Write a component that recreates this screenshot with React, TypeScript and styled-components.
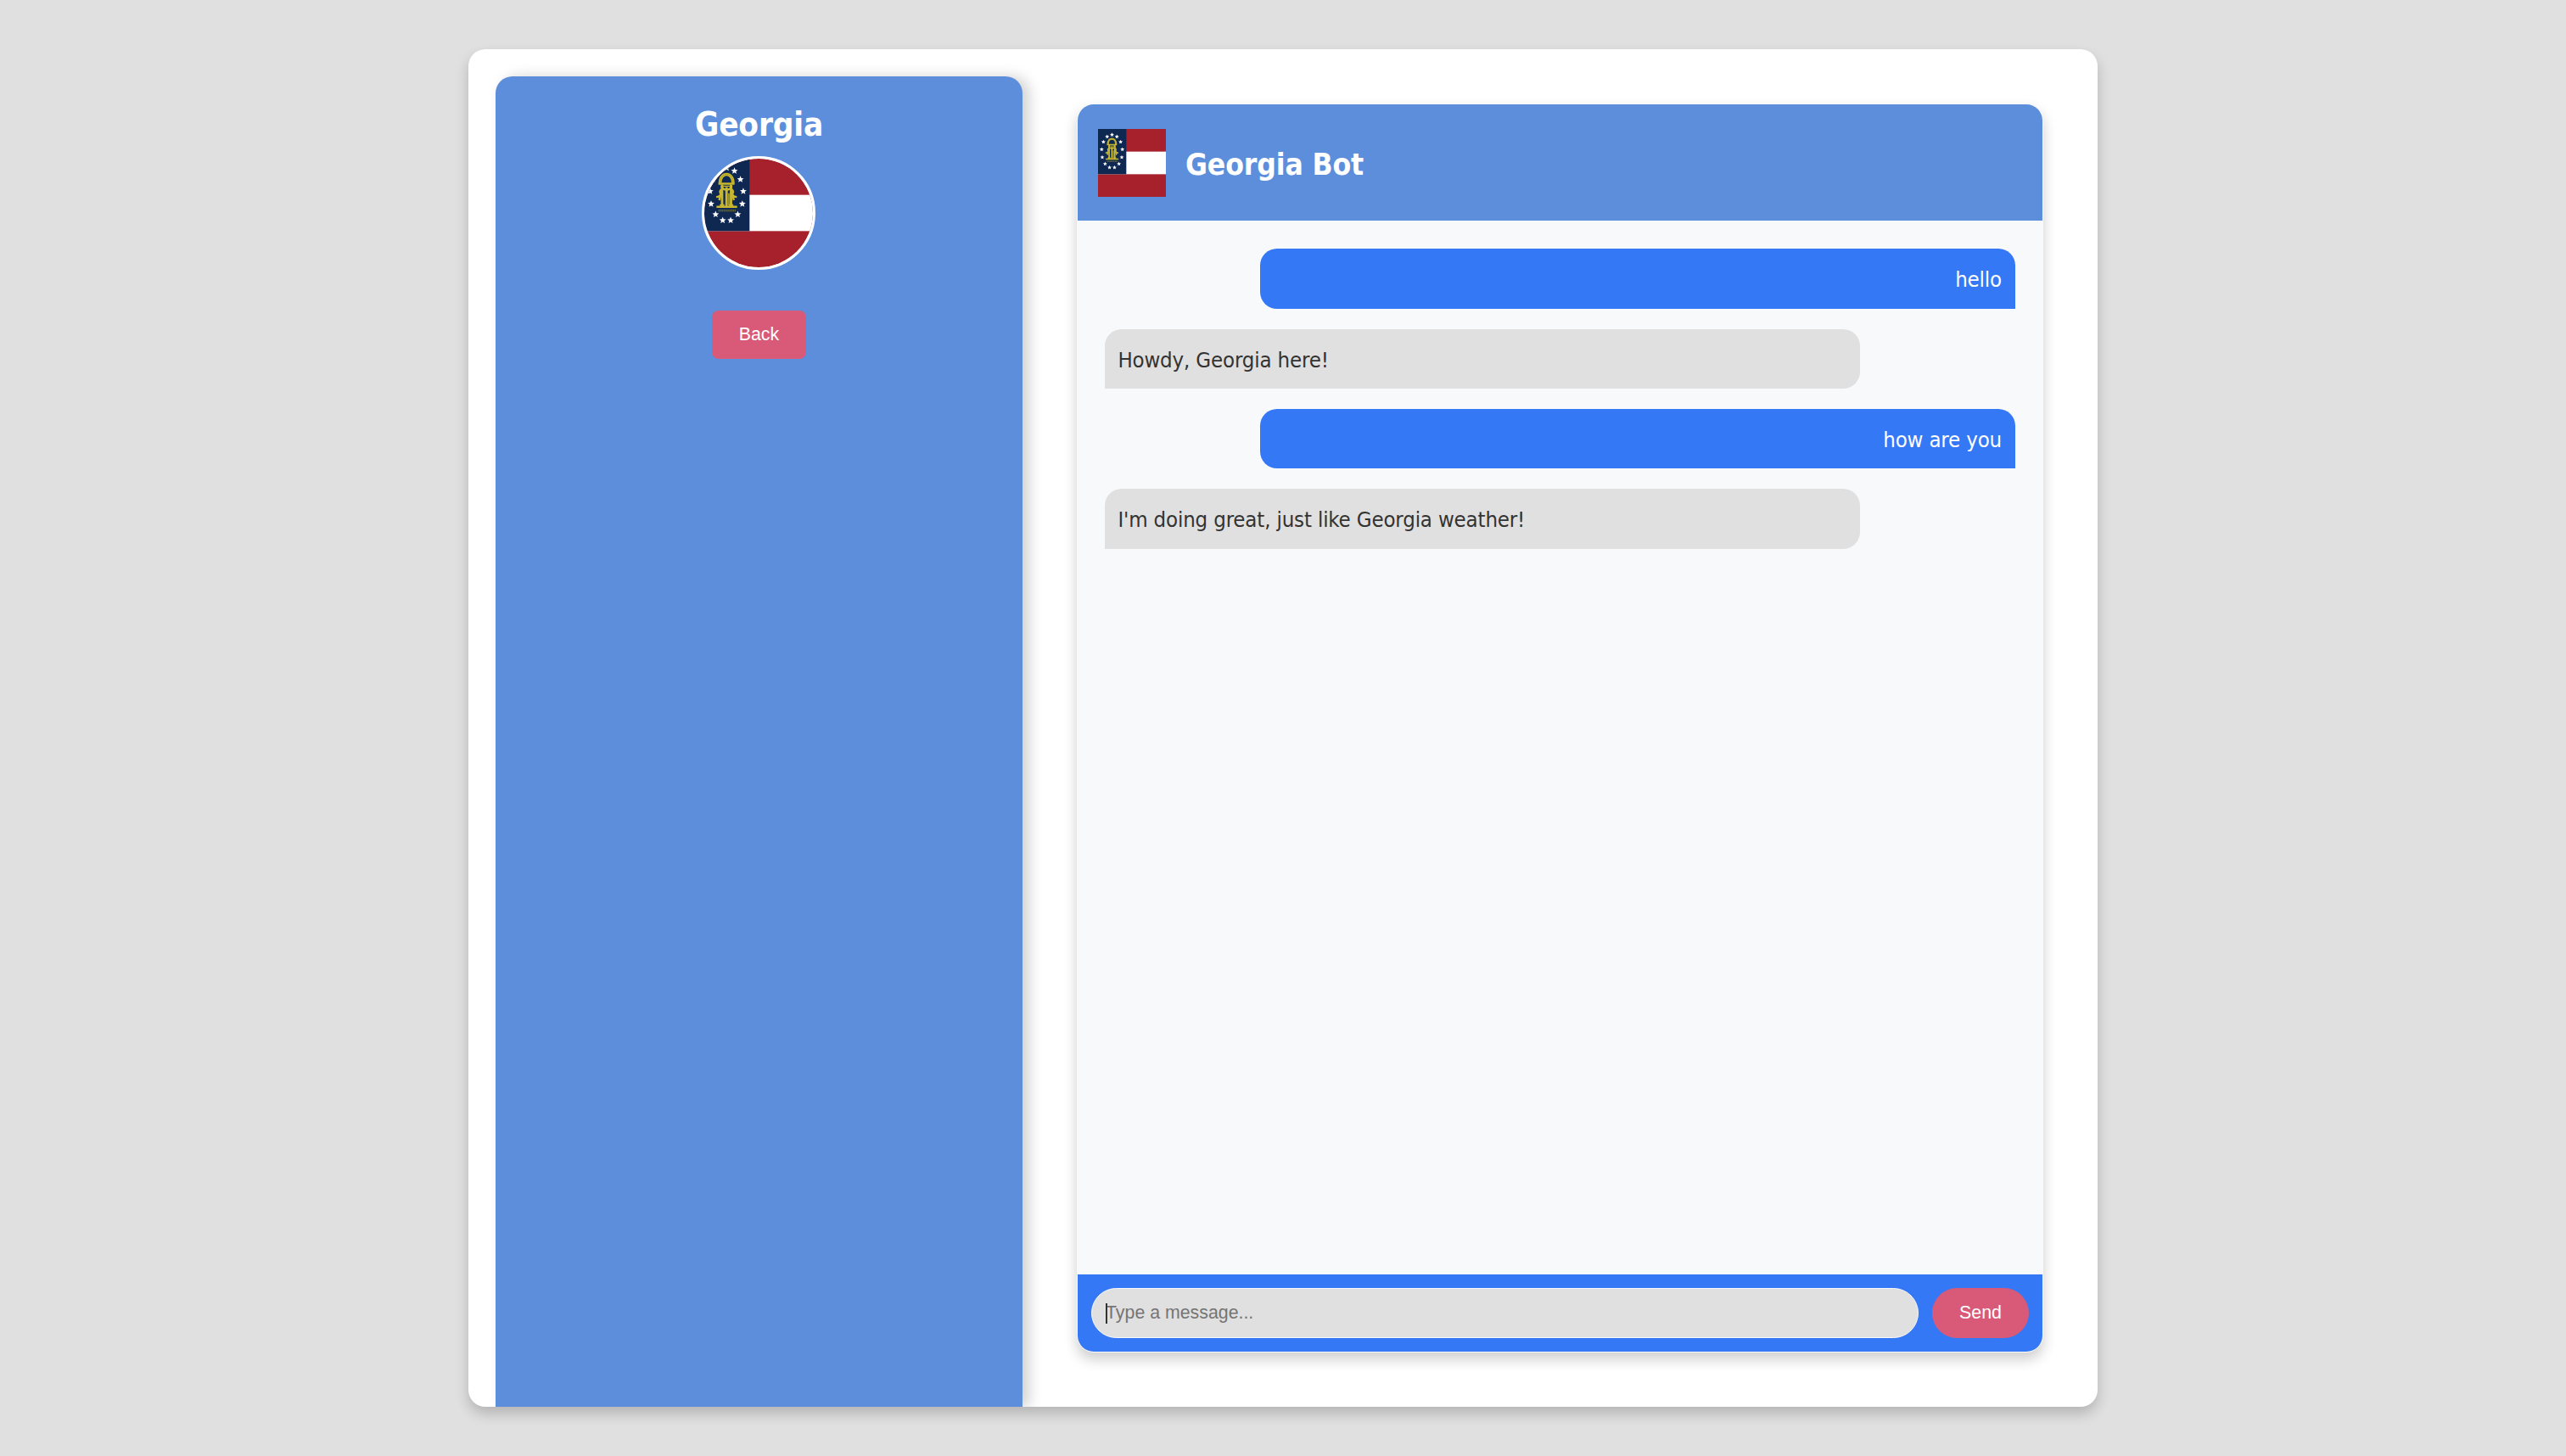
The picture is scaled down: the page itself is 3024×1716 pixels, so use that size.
import React from "react";
import styled, { createGlobalStyle, css } from "styled-components";

const color = {
  page: "#e0e0e0",
  surface: "#ffffff",
  panel: "#5c8edb",
  chat: "#f8f9fb",
  user: "#3478f6",
  bot: "#e0e0e0",
  accent: "#d95a78",
  text: "#333333",
};

const bodyFont = `"DejaVu Sans Condensed", "DejaVu Sans", sans-serif`;
const controlFont = `"Liberation Sans", Arial, sans-serif`;

const GlobalStyle = createGlobalStyle`
  * { box-sizing: border-box; }
  body {
    margin: 0;
    background: ${color.page};
    color: ${color.text};
    font-family: ${bodyFont};
  }
`;

const Page = styled.div`
  display: flex;
  align-items: center;
  justify-content: center;
  height: 100vh;
  overflow: hidden;
`;

const Container = styled.div`
  display: flex;
  gap: 64px;
  width: 1920px;
  height: 1600px;
  padding: 32px 64px 0 32px;
  overflow: hidden;
  background: ${color.surface};
  border-radius: 20px;
  box-shadow: 0 8px 16px rgba(0, 0, 0, 0.2);
`;

const Sidebar = styled.aside`
  display: flex;
  flex-direction: column;
  align-items: center;
  flex: none;
  width: 621px;
  padding-top: 33px;
  background: ${color.panel};
  border-radius: 20px 20px 0 0;
  box-shadow: 8px 0 16px rgba(0, 0, 0, 0.18);
`;

const SidebarTitle = styled.h2`
  margin: 0 0 13px;
  color: #fff;
  font-size: 38.4px;
  line-height: 48px;
  letter-spacing: -0.2px;
`;

const Avatar = styled.div`
  width: 134px;
  height: 134px;
  margin: 0 1px 48px 0;
  overflow: hidden;
  background: #fff;
  border: 3px solid #fff;
  border-radius: 50%;

  svg {
    display: block;
    width: 128px;
    height: 128px;
    border-radius: 50%;
  }
`;

const Button = styled.button<{ $pill?: boolean }>`
  flex: none;
  padding: 0 32px;
  height: 57px;
  border: 0;
  border-radius: 8px;
  background: ${color.accent};
  color: #fff;
  font: 21.33px ${controlFont};

  ${(p) =>
    p.$pill &&
    css`
      width: 114px;
      height: 59px;
      padding: 0;
      border-radius: 32px;
    `}
`;

const ChatBox = styled.main`
  display: flex;
  flex-direction: column;
  flex: 1;
  height: 1472px;
  margin-top: 32px;
  overflow: hidden;
  background: ${color.chat};
  border: 1px solid ${color.chat};
  border-radius: 20px;
  box-shadow: 0 8px 16px rgba(0, 0, 0, 0.2);
`;

const ChatHeader = styled.header`
  display: flex;
  align-items: center;
  gap: 23px;
  height: 137px;
  flex: none;
  padding: 0 24px;
  background: ${color.panel};

  svg {
    display: block;
    width: 80px;
    height: 80px;
  }
`;

const ChatTitle = styled.h1`
  margin: 0;
  padding-top: 4px;
  color: #fff;
  font-size: 35.2px;
  line-height: 42px;
  letter-spacing: -0.15px;
`;

const Messages = styled.div`
  display: flex;
  flex-direction: column;
  gap: 24px;
  flex: 1;
  padding: 33.2px 32px 32px;
`;

const Message = styled.div<{ $from: "user" | "bot" }>`
  width: 890.4px;
  padding: 17px 16px 15px;
  font-size: 25.6px;
  line-height: 38.4px;
  letter-spacing: -0.17px;

  ${(p) =>
    p.$from === "user"
      ? css`
          align-self: flex-end;
          background: ${color.user};
          color: #fff;
          text-align: right;
          border-radius: 20px 20px 0 20px;
        `
      : css`
          align-self: flex-start;
          padding-left: 15.4px;
          background: ${color.bot};
          border-radius: 20px 20px 20px 0;
        `}
`;

const Composer = styled.form`
  display: flex;
  align-items: center;
  gap: 16px;
  flex: none;
  height: 91px;
  padding: 0 16px;
  background: ${color.user};
`;

const Field = styled.label`
  position: relative;
  display: flex;
  flex: 1;
`;

const Input = styled.input`
  width: 100%;
  height: 59px;
  padding: 0 16px;
  border: 1px solid ${color.chat};
  border-radius: 32px;
  outline: none;
  background: ${color.bot};
  color: ${color.text};
  font: 21.33px ${controlFont};

  &::placeholder {
    color: #757575;
    opacity: 1;
  }
`;

const Caret = styled.span`
  position: absolute;
  left: 17px;
  top: 18px;
  width: 2px;
  height: 24px;
  background: ${color.text};
`;

const starPoints = Array.from({ length: 10 }, (_, i) => {
  const a = (i * Math.PI) / 5;
  const r = i % 2 ? 1.15 : 2.6;
  return `${(r * Math.sin(a)).toFixed(2)},${(-r * Math.cos(a)).toFixed(2)}`;
}).join(" ");

const stars = Array.from({ length: 13 }, (_, i) => {
  const a = (i * 2 * Math.PI) / 13;
  return { x: 16.5 + 12.3 * Math.sin(a), y: 26.4 - 19.6 * Math.cos(a) };
});

const gold = "#c8b72f";

function GeorgiaFlag() {
  return (
    <svg viewBox="0 0 80 80" preserveAspectRatio="none" role="img">
      <rect width="80" height="80" fill="#a6212b" />
      <rect y="26.67" width="80" height="26.67" fill="#fff" />
      <rect width="33.33" height="53.33" fill="#0e2851" />
      {stars.map((s, i) => (
        <polygon key={i} points={starPoints} fill="#fff" transform={`translate(${s.x} ${s.y})`} />
      ))}
      <g fill="none" stroke={gold}>
        <path d="M11.6 18C11.6 9.4 21.2 9.4 21.2 18" strokeWidth="2.3" />
        <path d="M11.6 18C11.6 9.4 21.2 9.4 21.2 18" stroke="#8f872f" strokeWidth="0.7" strokeDasharray="0.7 0.9" />
        <path d="M10.4 18.4H22.3" strokeWidth="1.5" />
        <path d="M13.1 19V35M19.7 19V35" strokeWidth="1.8" />
        <path d="M16.4 21V35" strokeWidth="1.8" />
        <path d="M18.1 25.5V34.5" strokeWidth="0.9" />
        <path d="M12.4 20.2H20.4" strokeWidth="0.8" />
        <path d="M12.6 20.2Q13.6 22.9 16.4 22.9Q19.2 22.9 20.2 20.2" strokeWidth="1.6" />
        <path d="M12.6 22.5Q10.8 24.2 12.2 25.8Q11.8 28.2 8.8 28.2M12.2 25.8L11 30.6" strokeWidth="1.5" />
        <path d="M20.2 22.5Q22 24.2 20.6 25.8Q21 28.2 24 28.2M20.6 25.8L21.8 30.6" strokeWidth="1.5" />
        <path d="M9 35.5H24.2" strokeWidth="1.5" />
        <path d="M11.4 34.2H14.8M18.2 34.2H21.4" strokeWidth="1.2" />
        <path d="M10.4 38.2H23.2" stroke="#585f3b" strokeWidth="1.7" strokeDasharray="0.9 0.3" />
      </g>
    </svg>
  );
}

const conversation: { from: "user" | "bot"; text: string }[] = [
  { from: "user", text: "hello" },
  { from: "bot", text: "Howdy, Georgia here!" },
  { from: "user", text: "how are you" },
  { from: "bot", text: "I'm doing great, just like Georgia weather!" },
];

export default function App() {
  return (
    <Page>
      <GlobalStyle />
      <Container>
        <Sidebar>
          <SidebarTitle>Georgia</SidebarTitle>
          <Avatar>
            <GeorgiaFlag />
          </Avatar>
          <Button type="button">Back</Button>
        </Sidebar>
        <ChatBox>
          <ChatHeader>
            <GeorgiaFlag />
            <ChatTitle>Georgia Bot</ChatTitle>
          </ChatHeader>
          <Messages>
            {conversation.map((m) => (
              <Message key={m.text} $from={m.from}>
                {m.text}
              </Message>
            ))}
          </Messages>
          <Composer>
            <Field>
              <Input placeholder="Type a message..." />
              <Caret />
            </Field>
            <Button type="button" $pill>
              Send
            </Button>
          </Composer>
        </ChatBox>
      </Container>
    </Page>
  );
}
